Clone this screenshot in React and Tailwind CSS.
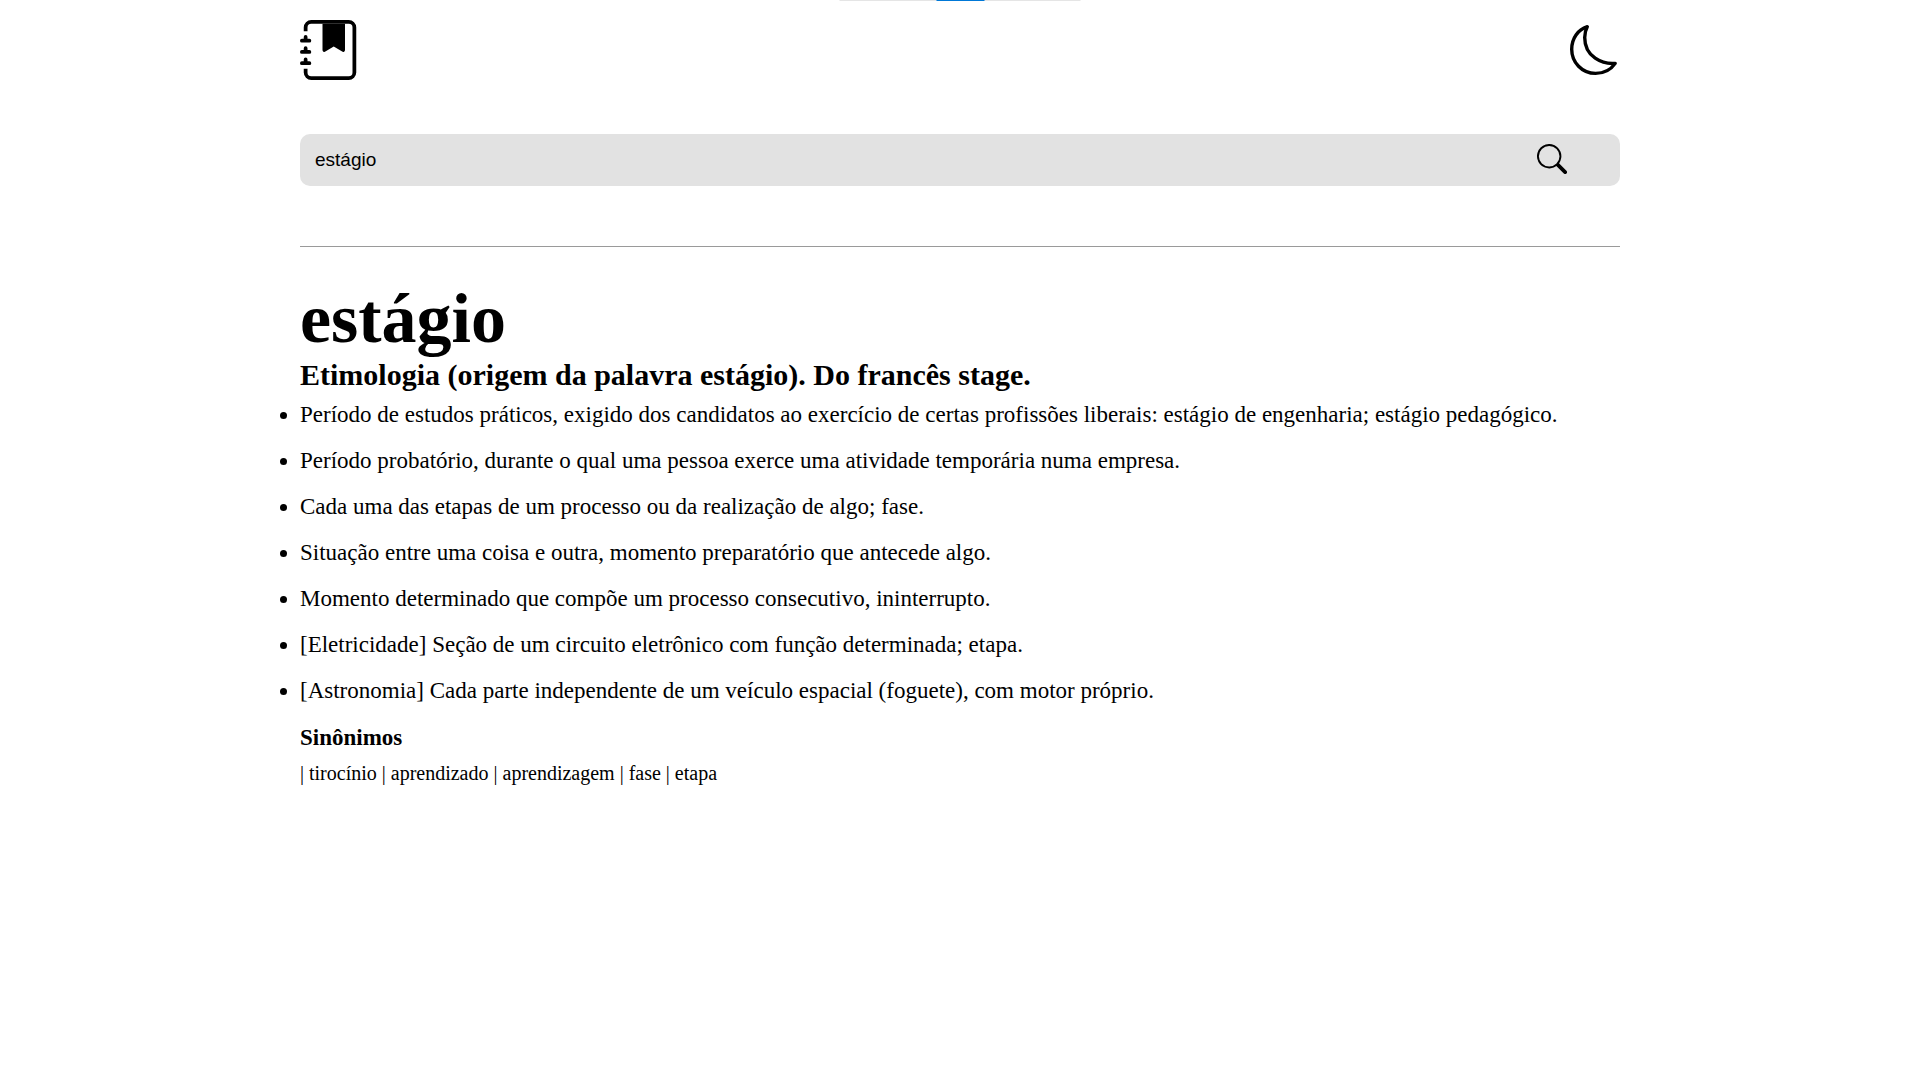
import { BsJournalBookmarkFill, BsSearch } from "react-icons/bs";

const meanings = [
  "Período de estudos práticos, exigido dos candidatos ao exercício de certas profissões liberais: estágio de engenharia; estágio pedagógico.",
  "Período probatório, durante o qual uma pessoa exerce uma atividade temporária numa empresa.",
  "Cada uma das etapas de um processo ou da realização de algo; fase.",
  "Situação entre uma coisa e outra, momento preparatório que antecede algo.",
  "Momento determinado que compõe um processo consecutivo, ininterrupto.",
  "[Eletricidade] Seção de um circuito eletrônico com função determinada; etapa.",
  "[Astronomia] Cada parte independente de um veículo espacial (foguete), com motor próprio.",
];

const synonyms = ["tirocínio", "aprendizado", "aprendizagem", "fase", "etapa"];

function MoonIcon() {
  return (
    <svg
      viewBox="0 0 60 60"
      className="size-[60px]"
      fill="none"
      stroke="currentColor"
      strokeWidth="3.4"
      strokeLinejoin="round"
      aria-hidden="true"
    >
      <path d="M27.3 6.7C18 9.5 11.7 18.5 11.7 29.3C11.7 42.5 22 53.4 35.5 53.4C44 53.4 50.8 49.8 55.2 43.4C48 44 41.2 42.3 35.2 38.2C27.5 33 24.7 24.5 24.7 17.5C24.7 13.5 25.5 10 27.3 6.7Z" />
    </svg>
  );
}

export default function App() {
  return (
    <div className="min-h-screen bg-white font-['Liberation_Serif',serif] text-black">
      <div className="absolute top-0 left-1/2 flex h-px w-[241px] -translate-x-1/2 justify-center bg-[#e5e5e5]">
        <div className="w-12 bg-[#0078d7]" />
      </div>

      <div className="mx-auto w-full max-w-[1320px]">
        <header className="flex items-center justify-between pt-5">
          <a href="#" aria-label="Dicionário">
            <BsJournalBookmarkFill className="size-[60px]" />
          </a>
          <button type="button" aria-label="Alternar tema">
            <MoonIcon />
          </button>
        </header>

        <form
          className="mt-[54px] flex h-[52px] items-center rounded-[10px] bg-[#e2e2e2] pr-[53px] pb-0.5 pl-[15px]"
          onSubmit={(event) => event.preventDefault()}
        >
          <input
            type="text"
            aria-label="Buscar palavra"
            defaultValue="estágio"
            className="min-w-0 flex-1 bg-transparent pt-0.5 font-['Liberation_Sans',sans-serif] text-[19px] outline-none"
          />
          <button type="submit" aria-label="Buscar">
            <BsSearch className="size-[30px]" />
          </button>
        </form>

        <hr className="mt-[60px] border-[#9a9a9a]" />

        <main className="pt-8">
          <h1 className="text-[70px] leading-[79px] font-bold">estágio</h1>
          <h2 className="text-3xl leading-[34px] font-bold">
            Etimologia (origem da palavra estágio). Do francês stage.
          </h2>
          <ul className="list-disc text-[23px] leading-[46px]">
            {meanings.map((meaning) => (
              <li key={meaning}>{meaning}</li>
            ))}
          </ul>
          <h3 className="text-[23px] leading-[48px] font-bold">Sinônimos</h3>
          <p className="text-xl leading-[22px]">
            {synonyms.map((synonym) => `| ${synonym} `).join("")}
          </p>
        </main>
      </div>
    </div>
  );
}
